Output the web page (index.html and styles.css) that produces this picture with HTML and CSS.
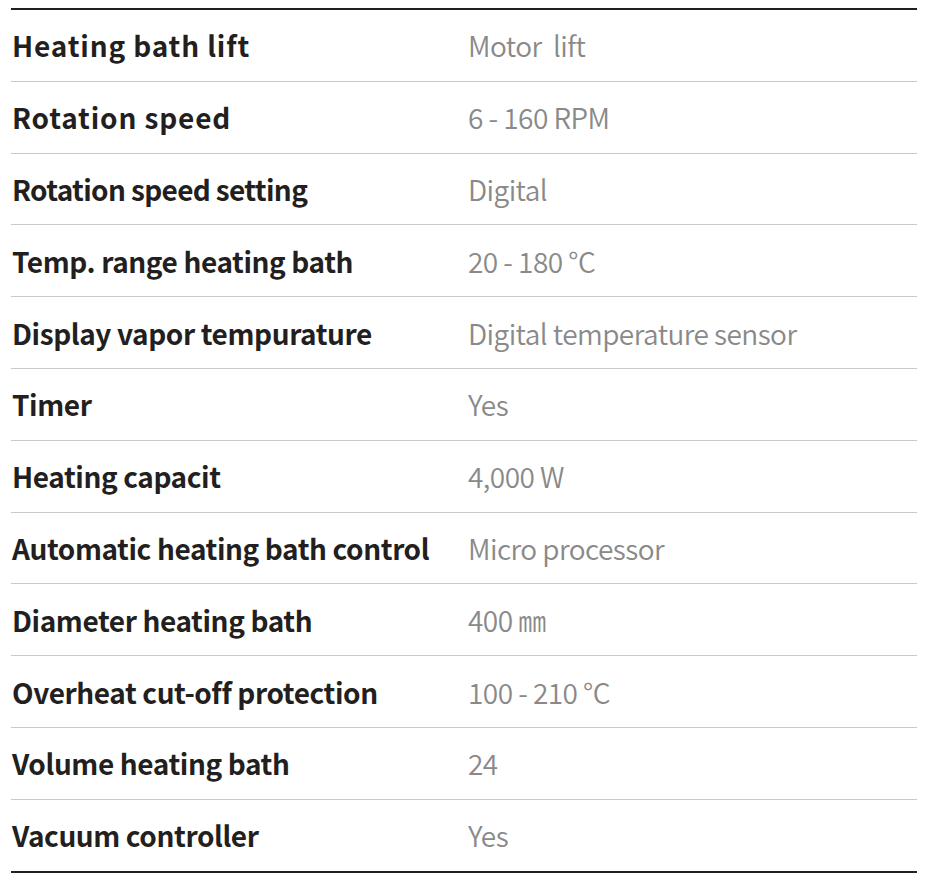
FILE: index.html
```html
<!DOCTYPE html>
<html>
<head>
<meta charset="utf-8">
<link rel="stylesheet" href="styles.css">
</head>
<body>
<div class="spec">
  <div class="row"><div class="label wide">Heating bath lift</div><div class="value">Motor&nbsp; lift</div></div>
  <div class="row"><div class="label wide">Rotation speed</div><div class="value">6 - 160 RPM</div></div>
  <div class="row"><div class="label tight">Rotation speed setting</div><div class="value">Digital</div></div>
  <div class="row"><div class="label">Temp. range heating bath</div><div class="value">20 - 180 °C</div></div>
  <div class="row"><div class="label">Display vapor tempurature</div><div class="value">Digital temperature sensor</div></div>
  <div class="row"><div class="label">Timer</div><div class="value">Yes</div></div>
  <div class="row"><div class="label">Heating capacit</div><div class="value">4,000 W</div></div>
  <div class="row"><div class="label">Automatic heating bath control</div><div class="value">Micro processor</div></div>
  <div class="row"><div class="label">Diameter heating bath</div><div class="value">400 ㎜</div></div>
  <div class="row"><div class="label">Overheat cut-off protection</div><div class="value">100 - 210 °C</div></div>
  <div class="row"><div class="label">Volume heating bath</div><div class="value">24</div></div>
  <div class="row"><div class="label">Vacuum controller</div><div class="value">Yes</div></div>
</div>
</body>
</html>
```
FILE: styles.css
```css
html, body {
  margin: 0;
  padding: 0;
  background: #ffffff;
}
body {
  padding: 8px 0 0 11px;
  font-family: "Noto Sans CJK KR", "Noto Sans", sans-serif;
}
.spec {
  width: 906px;
  border-top: 2px solid #231f20;
  border-bottom: 2px solid #231f20;
}
.row {
  display: flex;
  align-items: center;
  height: 70.8px;
  border-bottom: 1px solid #c9c9c9;
}
.row:last-child {
  border-bottom: none;
}
.label {
  width: 457px;
  padding-left: 1px;
  box-sizing: border-box;
  font-size: 28px;
  font-weight: 700;
  color: #231f20;
  letter-spacing: -0.4px;
}
.label.wide {
  letter-spacing: 0.85px;
}
.label.tight {
  letter-spacing: -0.65px;
}
.value {
  font-size: 28px;
  font-weight: 350;
  color: #898989;
  letter-spacing: -0.55px;
}
```
